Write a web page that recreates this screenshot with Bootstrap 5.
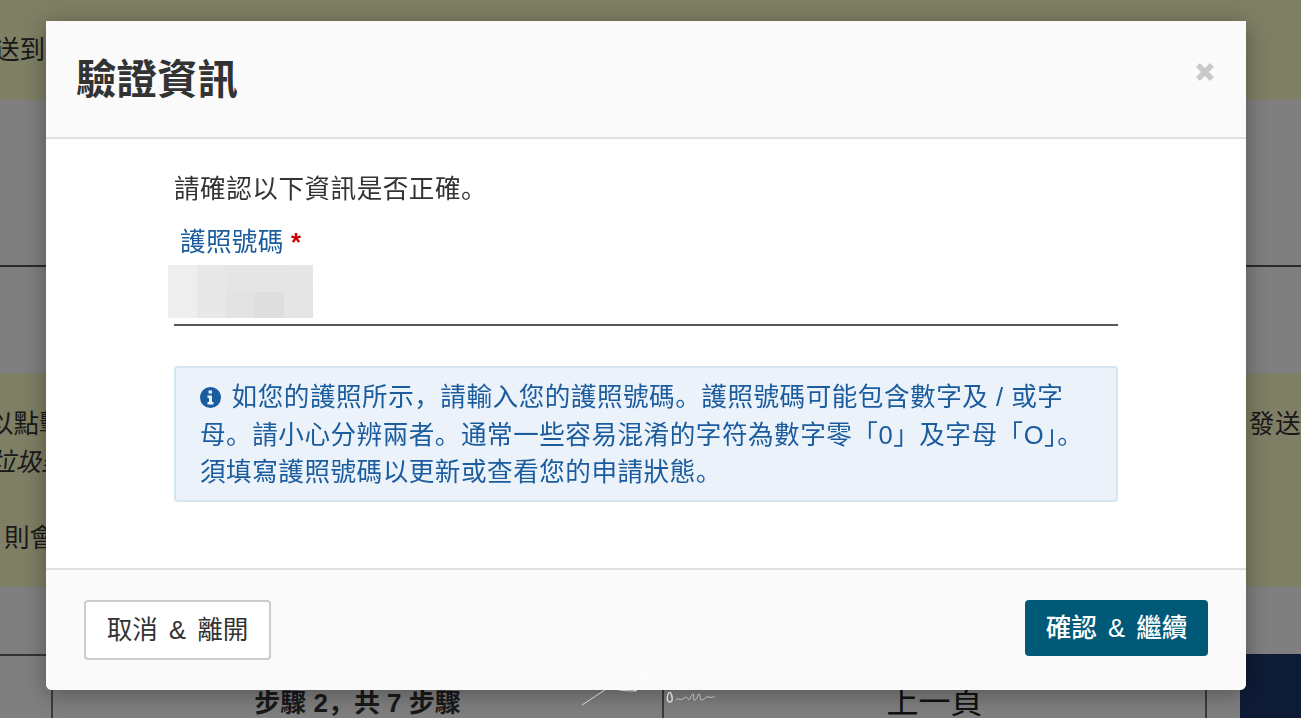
<!DOCTYPE html>
<html lang="zh-Hans">
<head>
<meta charset="utf-8">
<title>驗證資訊</title>
<link rel="stylesheet" href="https://cdn.jsdelivr.net/npm/bootstrap@5.3.0/dist/css/bootstrap.min.css">
<style>
html,body{height:100%;overflow:hidden}
body{font-family:"Liberation Sans","Noto Sans CJK SC",sans-serif;color:#333;background:#fff}
.under{height:718px;overflow:hidden;font-size:25.6px;color:#333}
.band-a{height:100px;background:#fffeca;padding-top:32px;line-height:36px;margin-left:-6px}
.band-b{height:273px}
.band-b-rule{height:167px;border-bottom:2px solid #555;width:100%}
.band-c{height:214px;background:#fffeca;padding-top:32px;line-height:38px}
.band-c-row{white-space:nowrap}
.band-c-clipl{margin-left:-12px}
.band-c-clipr{margin-right:0;letter-spacing:.5px}
.band-c-it{font-style:italic;margin-left:-10px}
.band-c-gap{margin-top:38px;margin-left:4px}
.band-d{height:131px}
.band-d-row{margin-top:67px;border-top:2px solid #666;height:64px;margin-right:61px}
.band-d-cell{border-left:2px solid #777;font-size:26px;text-align:center;height:64px;padding-top:28px}
.cell-a{margin-left:51px;width:611px;font-weight:700}
.cell-b{width:545px;font-size:32px;color:#222;padding-top:22px;border-right:2px solid #777}
.navy{position:absolute;right:0;top:654px;width:61px;height:64px;background:#1d376e}
.sheet.modal{padding:0!important}
.sheet .modal-dialog{max-width:1200px;margin:21px 0 0 46px;width:1200px}
.sheet .modal-content{border:0;border-radius:0 0 6px 6px;height:669px;box-shadow:0 4px 24px rgba(0,0,0,.35);background:#fff;font-size:25.6px;color:#333}
.sheet .modal-header{height:118px;background:#fafafa;border-bottom:2px solid #e0e0e0;border-radius:0;padding:0 31px 0 31px;align-items:center}
.sheet .modal-title{font-size:40.500px;font-weight:700;line-height:1.2;color:#333;margin-left:-1px;margin-top:3px}
.x-btn{background:none;border:0;padding:0;line-height:0;margin:-14px 0 0 0}
.sheet .modal-body{padding:31px 128px 0;flex:1 1 auto}
.intro{line-height:38px;margin-bottom:16px;letter-spacing:.5px}
.fld-label{color:#1a5c9e;line-height:36px;margin-left:6px;letter-spacing:.3px}
.req{color:#c00;font-weight:700}
.fld{border-bottom:2px solid #555;height:66px;padding-top:5px}
.blur{display:grid;grid-template-columns:repeat(5,29px);grid-auto-rows:26.5px;margin-left:-6px;width:145px}
.blur i{display:block}
.c1{background:#eeeeee}.c2{background:#e7e7e7}.c3{background:#e5e5e5}.c4{background:#e6e6e6}
.c5{background:#e8e8e8}.c6{background:#e3e3e3}.c7{background:#dedede}
.hint{margin:40px 0 0;padding:11px 24px 10px;background:#ecf2fa;border:2px solid #d5e5ef;border-radius:4px;color:#1a5c9e;line-height:37.5px;height:136px;letter-spacing:.5px}
.hint svg{vertical-align:-2px;margin-right:3px}
.sheet .modal-footer{height:122px;background:#fafafa;border-top:2px solid #e0e0e0;border-radius:0 0 6px 6px;padding:30px 38px 0;align-items:flex-start;justify-content:space-between;flex-wrap:nowrap}
.btn-leave,.btn-go{font-size:25.6px;border-radius:4px;margin:0;padding:0;white-space:nowrap;word-spacing:4px}
.btn-leave{width:187px;height:60px;background:#fff;border:2px solid #ccc;color:#333}
.btn-go{width:183px;height:56px;background:#005a77;border:0;color:#fff;font-weight:500}
.sig{position:fixed;left:578px;top:655px;z-index:1060;pointer-events:none}
</style>
</head>
<body>
<div class="under">
  <div class="band-a">送到</div>
  <div class="band-b"><div class="band-b-rule"></div></div>
  <div class="band-c">
    <div class="band-c-row d-flex justify-content-between"><span class="band-c-clipl">以點擊</span><span class="band-c-clipr">發送</span></div>
    <div class="band-c-row band-c-it">垃圾郵</div>
    <div class="band-c-row band-c-gap">則會</div>
  </div>
  <div class="band-d">
    <div class="band-d-row d-flex">
      <div class="band-d-cell cell-a">步驟 2，共 7 步驟</div>
      <div class="band-d-cell cell-b">上一頁</div>
    </div>
  </div>
</div>
<div class="navy"></div>
<div class="modal-backdrop show"></div>
<div class="modal sheet d-block" tabindex="-1">
  <div class="modal-dialog">
    <div class="modal-content">
      <div class="modal-header justify-content-between">
        <h1 class="modal-title">驗證資訊</h1>
        <button type="button" class="x-btn" aria-label="Close">
          <svg width="20" height="20" viewBox="0 0 20 20"><path d="M3 3l14 14M17 3L3 17" stroke="#c9c9c9" stroke-width="5.5" fill="none"/></svg>
        </button>
      </div>
      <div class="modal-body">
        <p class="intro">請確認以下資訊是否正確。</p>
        <div class="fld-label">護照號碼 <span class="req">*</span></div>
        <div class="fld">
          <div class="blur">
            <i class="c1"></i><i class="c2"></i><i class="c3"></i><i class="c3"></i><i class="c4"></i>
            <i class="c1"></i><i class="c5"></i><i class="c6"></i><i class="c7"></i><i class="c3"></i>
          </div>
        </div>
        <div class="hint">
          <svg width="21" height="21" viewBox="0 0 21 21"><circle cx="10.5" cy="10.5" r="10.5" fill="#1a5c9e"/><path d="M8.500 3.500h3.500v3H8.500zM7.500 8.500h4.500v6.500h1.500v2.500h-6v-2.500H9v-4H7.500z" fill="#ecf2fa"/></svg>
          如您的護照所示，請輸入您的護照號碼。護照號碼可能包含數字及 / 或字母。請小心分辨兩者。通常一些容易混淆的字符為數字零「0」及字母「O」。須填寫護照號碼以更新或查看您的申請狀態。
        </div>
      </div>
      <div class="modal-footer">
        <button type="button" class="btn btn-leave">取消 &amp; 離開</button>
        <button type="button" class="btn btn-go">確認 &amp; 繼續</button>
      </div>
    </div>
  </div>
</div>
<svg class="sig" width="150" height="55" viewBox="0 0 150 55" fill="none" stroke="#fff" stroke-opacity=".7" stroke-width="1">
  <path d="M4 50L30 33C42 24 52 12 62 6c6-3 14-3 16-1M40 24c3 6 20 6 20 10 0 3-14 2-24 0"/>
  <path d="M57 37l2-8c4-6 8-8 10-14 1 6-2 12-1 16 4-2 8-8 12-9l2 8c6-8 14-10 22-8 8 1 14 2 22-1"/>
  <path d="M91 37c-3 6-2 10 1 10s3-6 0-10" stroke-width="1.5"/>
  <path d="M98 45c3-3 4 1 7-1s3-3 5 0 3-5 5-5-1 7 2 6 2-6 4-6 0 7 3 6 4-4 7-3 4 0 6-1" stroke-opacity=".55"/>
</svg>
<script src="https://cdn.jsdelivr.net/npm/bootstrap@5.3.0/dist/js/bootstrap.bundle.min.js"></script>
</body>
</html>
